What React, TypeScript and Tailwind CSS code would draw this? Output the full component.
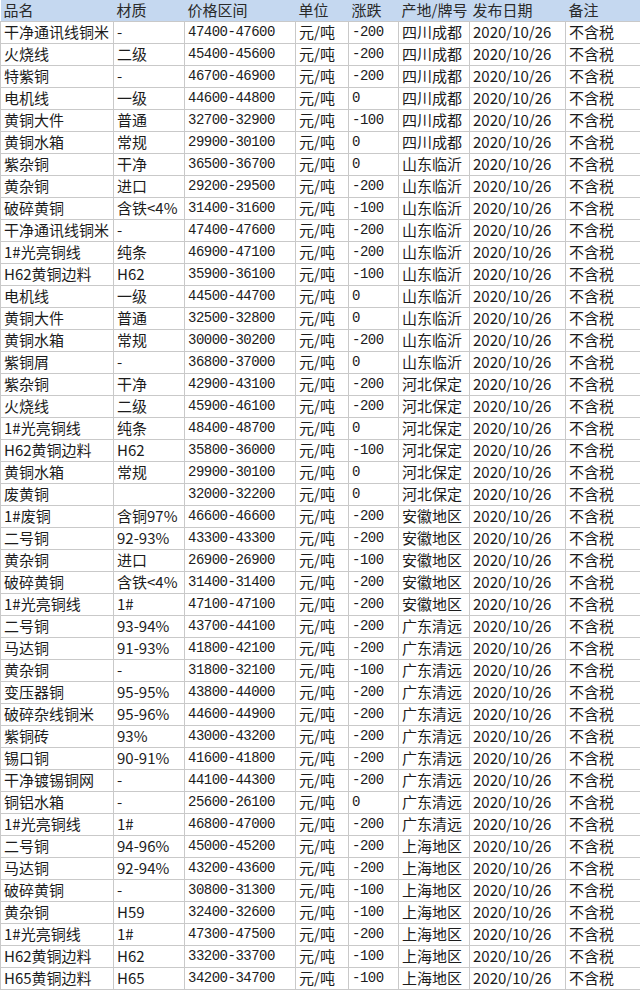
const headers = ["品名", "材质", "价格区间", "单位", "涨跌", "产地/牌号", "发布日期", "备注"]

// name | material | price | change | region
const rows: [string, string, string, string, string][] = [
  ["干净通讯线铜米", "-", "47400-47600", "-200", "四川成都"],
  ["火烧线", "二级", "45400-45600", "-200", "四川成都"],
  ["特紫铜", "-", "46700-46900", "-200", "四川成都"],
  ["电机线", "一级", "44600-44800", "0", "四川成都"],
  ["黄铜大件", "普通", "32700-32900", "-100", "四川成都"],
  ["黄铜水箱", "常规", "29900-30100", "0", "四川成都"],
  ["紫杂铜", "干净", "36500-36700", "0", "山东临沂"],
  ["黄杂铜", "进口", "29200-29500", "-200", "山东临沂"],
  ["破碎黄铜", "含铁<4%", "31400-31600", "-100", "山东临沂"],
  ["干净通讯线铜米", "-", "47400-47600", "-200", "山东临沂"],
  ["1#光亮铜线", "纯条", "46900-47100", "-200", "山东临沂"],
  ["H62黄铜边料", "H62", "35900-36100", "-100", "山东临沂"],
  ["电机线", "一级", "44500-44700", "0", "山东临沂"],
  ["黄铜大件", "普通", "32500-32800", "0", "山东临沂"],
  ["黄铜水箱", "常规", "30000-30200", "-200", "山东临沂"],
  ["紫铜屑", "-", "36800-37000", "0", "山东临沂"],
  ["紫杂铜", "干净", "42900-43100", "-200", "河北保定"],
  ["火烧线", "二级", "45900-46100", "-200", "河北保定"],
  ["1#光亮铜线", "纯条", "48400-48700", "0", "河北保定"],
  ["H62黄铜边料", "H62", "35800-36000", "-100", "河北保定"],
  ["黄铜水箱", "常规", "29900-30100", "0", "河北保定"],
  ["废黄铜", "", "32000-32200", "0", "河北保定"],
  ["1#废铜", "含铜97%", "46600-46600", "-200", "安徽地区"],
  ["二号铜", "92-93%", "43300-43300", "-200", "安徽地区"],
  ["黄杂铜", "进口", "26900-26900", "-100", "安徽地区"],
  ["破碎黄铜", "含铁<4%", "31400-31400", "-200", "安徽地区"],
  ["1#光亮铜线", "1#", "47100-47100", "-200", "安徽地区"],
  ["二号铜", "93-94%", "43700-44100", "-200", "广东清远"],
  ["马达铜", "91-93%", "41800-42100", "-200", "广东清远"],
  ["黄杂铜", "-", "31800-32100", "-100", "广东清远"],
  ["变压器铜", "95-95%", "43800-44000", "-200", "广东清远"],
  ["破碎杂线铜米", "95-96%", "44600-44900", "-200", "广东清远"],
  ["紫铜砖", "93%", "43000-43200", "-200", "广东清远"],
  ["锡口铜", "90-91%", "41600-41800", "-200", "广东清远"],
  ["干净镀锡铜网", "-", "44100-44300", "-200", "广东清远"],
  ["铜铝水箱", "-", "25600-26100", "0", "广东清远"],
  ["1#光亮铜线", "1#", "46800-47000", "-200", "广东清远"],
  ["二号铜", "94-96%", "45000-45200", "-200", "上海地区"],
  ["马达铜", "92-94%", "43200-43600", "-200", "上海地区"],
  ["破碎黄铜", "-", "30800-31300", "-100", "上海地区"],
  ["黄杂铜", "H59", "32400-32600", "-100", "上海地区"],
  ["1#光亮铜线", "1#", "47300-47500", "-200", "上海地区"],
  ["H62黄铜边料", "H62", "33200-33700", "-100", "上海地区"],
  ["H65黄铜边料", "H65", "34200-34700", "-100", "上海地区"],
]

const cell = "border border-[#c9c9c9] px-[3px] h-[22px] whitespace-nowrap overflow-hidden leading-[20px] align-middle"
const mono = "font-['Liberation_Mono','Noto_Sans_CJK_SC',monospace] text-[14px] tracking-[-0.5px]"

export default function App() {
  return (
    <main className="w-[640px] h-[991px] bg-white overflow-hidden font-['Noto_Sans_CJK_SC',sans-serif] text-[15px] text-[#1c1c1c]">
      <table className="table-fixed border-collapse w-[640px]">
        <colgroup>
          <col className="w-[113px]" />
          <col className="w-[71px]" />
          <col className="w-[111px]" />
          <col className="w-[53px]" />
          <col className="w-[50px]" />
          <col className="w-[71px]" />
          <col className="w-[96px]" />
          <col className="w-[75px]" />
        </colgroup>
        <thead>
          <tr className="bg-[#c5d8f0] h-[21px]">
            {headers.map((h) => (
              <th key={h} className="px-[3px] text-left font-normal text-[#2a2a2a] leading-[20px] whitespace-nowrap">
                {h}
              </th>
            ))}
          </tr>
        </thead>
        <tbody>
          {rows.map(([name, mat, price, chg, region], i) => (
            <tr key={i}>
              <td className={cell}>{name}</td>
              <td className={cell}>{mat}</td>
              <td className={`${cell} ${mono}`}>{price}</td>
              <td className={cell}>元/吨</td>
              <td className={`${cell} ${mono}`}>{chg}</td>
              <td className={cell}>{region}</td>
              <td className={cell}>2020/10/26</td>
              <td className={cell}>不含税</td>
            </tr>
          ))}
        </tbody>
      </table>
    </main>
  )
}
